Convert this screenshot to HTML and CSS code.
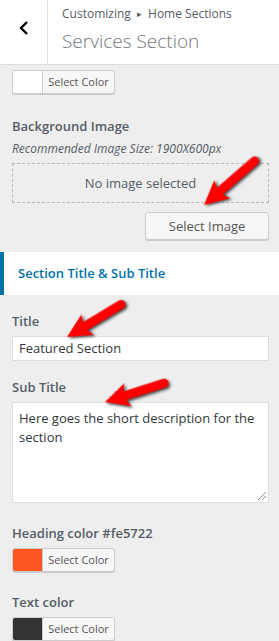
FILE: index.html
```html
<!DOCTYPE html>
<html>
    <head lang="en">
        <meta charset="UTF-8">
        <title>Services Section</title>
        <link rel="stylesheet" href="styles.css">
    </head>
    <body>
        <div id="header">
            <div class="back">
                <svg width="12" height="16" viewBox="0 0 12 16"><path d="M9 2 L3 8 L9 14" fill="none" stroke="#000" stroke-width="2.4"/></svg>
            </div>
            <div class="titles">
                <span class="crumb">Customizing <span class="sep">&#9656;</span> Home Sections</span>
                <span class="name">Services Section</span>
            </div>
        </div>

        <div class="panel">
            <div class="control top">
                <div class="color-btn"><span class="swatch white"></span><span class="color-text">Select Color</span></div>
            </div>
            <div class="control">
                <span class="label">Background Image</span>
                <span class="desc">Recommended Image Size: 1900X600px</span>
                <div class="placeholder">No image selected</div>
                <div class="actions"><span class="button">Select Image</span></div>
            </div>
        </div>

        <div class="group-head">Section Title &amp; Sub Title</div>

        <div class="panel">
            <div class="control">
                <span class="label">Title</span>
                <div class="input">Featured Section</div>
            </div>
            <div class="control area">
                <span class="label">Sub Title</span>
                <div class="textarea">Here goes the short description for the section<span class="grip"></span></div>
            </div>
            <div class="control color">
                <span class="label">Heading color #fe5722</span>
                <div class="color-btn"><span class="swatch orange"></span><span class="color-text">Select Color</span></div>
            </div>
            <div class="control color">
                <span class="label">Text color</span>
                <div class="color-btn"><span class="swatch dark"></span><span class="color-text">Select Color</span></div>
            </div>
        </div>

        <!-- red arrows drawn over the screenshot -->
        <svg id="arrows" width="279" height="641" viewBox="0 0 279 641">
            <path transform="translate(204 205) rotate(-41)" d="M0 0 L24 -12 L21 -4.5 L67 -4.5 A4.5 4.5 0 0 1 67 4.5 L21 4.5 L24 12 Z"/>
            <path transform="translate(67 337) rotate(-31)" d="M0 0 L24 -12 L21 -4.5 L63 -4.5 A4.5 4.5 0 0 1 63 4.5 L21 4.5 L24 12 Z"/>
            <path transform="translate(105 402) rotate(-17.6)" d="M0 0 L24 -12 L21 -4.5 L62 -4.5 A4.5 4.5 0 0 1 62 4.5 L21 4.5 L24 12 Z"/>
        </svg>
    </body>
</html>
```

FILE: styles.css
```css
*{
    margin:0;
    padding:0;
    box-sizing:border-box;
}
body{
    width:279px;
    height:641px;
    overflow:hidden;
    background-color:#eee;
    font-family:"Open Sans", "Noto Sans", sans-serif;
    color:#555d66;
    position:relative;
}
#header{
    display:flex;
    height:65px;
    background-color:#fff;
    border-bottom:1px solid #ddd;
}
#header .back{
    width:48px;
    border-right:1px solid #ddd;
    display:flex;
    align-items:center;
    justify-content:center;
    padding-bottom:8px;
}
#header .titles{
    display:flex;
    flex-direction:column;
    padding:5px 0 0 14px;
}
.crumb{
    font-size:12px;
    line-height:18px;
    color:#555d66;
}
.crumb .sep{
    font-size:9px;
    margin:0 3px;
    vertical-align:1px;
}
.name{
    font-size:19px;
    font-weight:300;
    line-height:26px;
    margin-top:5px;
    color:#72777c;
}
.panel{
    padding:0 10px 0 12px;
}
.control{
    margin-bottom:16px;
}
.control.top{
    padding-top:5px;
    margin-bottom:22px;
}
.control.area,
.control.color{
    margin-bottom:20px;
}
.control:last-child{
    margin-bottom:0;
}
.label{
    display:block;
    font-size:13px;
    font-weight:600;
    line-height:20px;
    margin-bottom:5px;
}
.desc{
    display:block;
    font-size:12px;
    font-style:italic;
    line-height:18px;
    margin:-1px 0 5px;
}
.placeholder{
    height:40px;
    border:1px dashed #b4b9be;
    text-align:center;
    line-height:38px;
    font-size:13px;
    color:#555d66;
}
.actions{
    display:flex;
    justify-content:flex-end;
    margin-top:9px;
}
.button{
    width:124px;
    height:28px;
    line-height:26px;
    text-align:center;
    font-size:13px;
    color:#555;
    background-color:#f7f7f7;
    border:1px solid #ccc;
    border-radius:3px;
    box-shadow:0 1px 0 #ccc;
}
.group-head{
    margin:12px 0 16px;
    height:43px;
    line-height:43px;
    background-color:#fff;
    border-left:4px solid #0073aa;
    padding-left:14px;
    font-size:13px;
    font-weight:600;
    color:#0073aa;
}
.input{
    height:25px;
    background-color:#fff;
    border:1px solid #ddd;
    padding:0 6px;
    line-height:23px;
    font-size:13px;
    color:#32373c;
}
.textarea{
    position:relative;
    height:101px;
    background-color:#fff;
    border:1px solid #ddd;
    padding:6px 6px;
    line-height:19px;
    font-size:13px;
    color:#32373c;
}
.grip{
    position:absolute;
    right:2px;
    bottom:2px;
    width:8px;
    height:8px;
    background:linear-gradient(135deg, transparent 45%, #888 46%, #888 52%, transparent 53%, transparent 70%, #888 71%, #888 77%, transparent 78%);
}
.color-btn{
    display:flex;
    width:103px;
    height:24px;
    border:1px solid #ccc;
    border-radius:3px;
    background-color:#f7f7f7;
    box-shadow:0 1px 0 #ccc;
    overflow:hidden;
}
.swatch{
    width:30px;
    border-right:1px solid #ccc;
}
.swatch.white{
    background-color:#fff;
}
.swatch.orange{
    background-color:#fe5722;
}
.swatch.dark{
    background-color:#333;
}
.color-text{
    flex:1;
    text-align:center;
    font-size:11px;
    line-height:22px;
    color:#555;
}
#arrows{
    position:absolute;
    left:0;
    top:0;
    pointer-events:none;
}
#arrows path{
    fill:#f00;
    filter:drop-shadow(1px 2px 1.5px rgba(0,0,0,0.75));
}
```
